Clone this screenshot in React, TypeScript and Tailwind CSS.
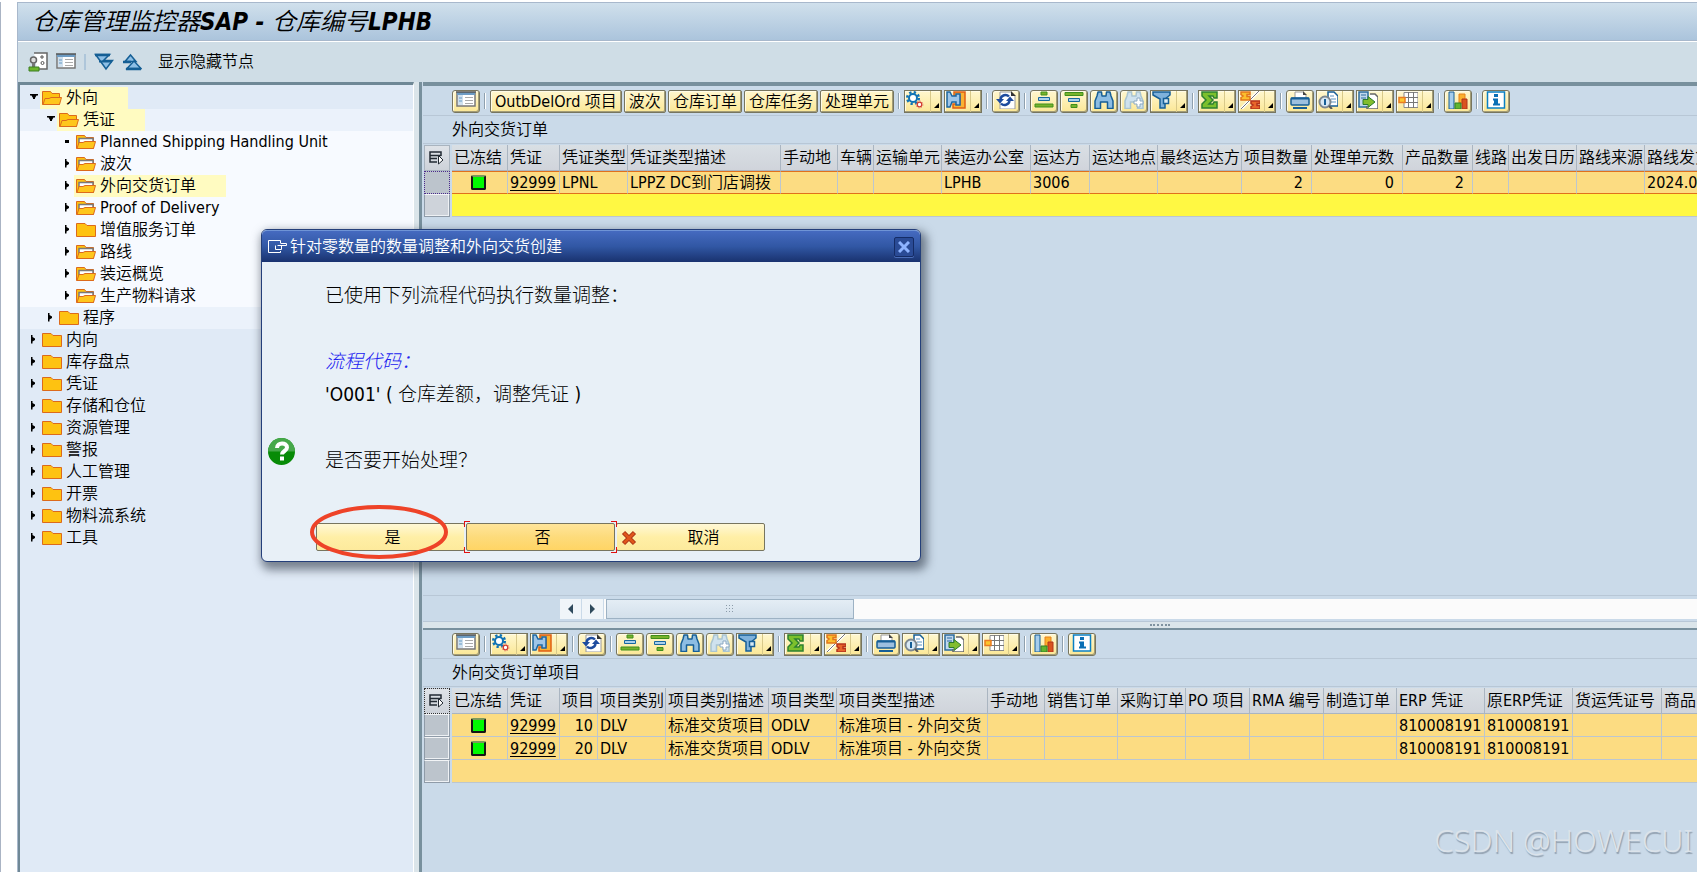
import type { ReactNode } from "react";
import clsx from "clsx";

type TreeItem = {
  label: string;
  level: 0 | 1 | 2;
  icon: "open" | "closed" | "doc";
  marker: "down" | "right" | "dot";
  marked?: boolean;
};

type Column = { title: string; width: number; align?: "right" };

const tree: TreeItem[] = [
  { label: "外向", level: 0, icon: "open", marker: "down", marked: true },
  { label: "凭证", level: 1, icon: "open", marker: "down", marked: true },
  { label: "Planned Shipping Handling Unit", level: 2, icon: "doc", marker: "dot" },
  { label: "波次", level: 2, icon: "doc", marker: "right" },
  { label: "外向交货订单", level: 2, icon: "doc", marker: "right", marked: true },
  { label: "Proof of Delivery", level: 2, icon: "doc", marker: "right" },
  { label: "增值服务订单", level: 2, icon: "closed", marker: "right" },
  { label: "路线", level: 2, icon: "doc", marker: "right" },
  { label: "装运概览", level: 2, icon: "doc", marker: "right" },
  { label: "生产物料请求", level: 2, icon: "doc", marker: "right" },
  { label: "程序", level: 1, icon: "closed", marker: "right" },
  { label: "内向", level: 0, icon: "closed", marker: "right" },
  { label: "库存盘点", level: 0, icon: "closed", marker: "right" },
  { label: "凭证", level: 0, icon: "closed", marker: "right" },
  { label: "存储和仓位", level: 0, icon: "closed", marker: "right" },
  { label: "资源管理", level: 0, icon: "closed", marker: "right" },
  { label: "警报", level: 0, icon: "closed", marker: "right" },
  { label: "人工管理", level: 0, icon: "closed", marker: "right" },
  { label: "开票", level: 0, icon: "closed", marker: "right" },
  { label: "物料流系统", level: 0, icon: "closed", marker: "right" },
  { label: "工具", level: 0, icon: "closed", marker: "right" },
];

const orderColumns: Column[] = [
  { title: "已冻结", width: 56 },
  { title: "凭证", width: 52 },
  { title: "凭证类型", width: 68 },
  { title: "凭证类型描述", width: 153 },
  { title: "手动地", width: 57 },
  { title: "车辆", width: 36 },
  { title: "运输单元", width: 68 },
  { title: "装运办公室", width: 89 },
  { title: "运达方", width: 59 },
  { title: "运达地点", width: 68 },
  { title: "最终运达方", width: 84 },
  { title: "项目数量", width: 70, align: "right" },
  { title: "处理单元数", width: 91, align: "right" },
  { title: "产品数量", width: 70, align: "right" },
  { title: "线路", width: 36 },
  { title: "出发日历", width: 68 },
  { title: "路线来源", width: 68 },
  { title: "路线发货", width: 120 },
];

const orderRows = [
  ["*", "92999", "LPNL", "LPPZ DC到门店调拨", "", "", "", "LPHB", "3006", "", "", "2", "0", "2", "", "", "", "2024.0"],
];

const itemColumns: Column[] = [
  { title: "已冻结", width: 56 },
  { title: "凭证", width: 52 },
  { title: "项目", width: 38, align: "right" },
  { title: "项目类别", width: 68 },
  { title: "项目类别描述", width: 103 },
  { title: "项目类型", width: 68 },
  { title: "项目类型描述", width: 151 },
  { title: "手动地", width: 57 },
  { title: "销售订单", width: 73 },
  { title: "采购订单", width: 68 },
  { title: "PO 项目", width: 64 },
  { title: "RMA 编号", width: 74 },
  { title: "制造订单", width: 73 },
  { title: "ERP 凭证", width: 88 },
  { title: "原ERP凭证", width: 88 },
  { title: "货运凭证号", width: 89 },
  { title: "商品", width: 120 },
];

const itemRows = [
  ["*", "92999", "10", "DLV", "标准交货项目", "ODLV", "标准项目 - 外向交货", "", "", "", "", "", "", "810008191", "810008191", "", ""],
  ["*", "92999", "20", "DLV", "标准交货项目", "ODLV", "标准项目 - 外向交货", "", "", "", "", "", "", "810008191", "810008191", "", ""],
];

const icons: Record<string, ReactNode> = {
  detail: (
    <>
      <rect x="1" y="2" width="18" height="13" fill="#fff" stroke="#777" strokeWidth="1.500" />
      <path d="M2 3h5v11H2z" fill="#cfe0ee" />
      <rect x="1" y="1" width="18" height="3" fill="#6d9cc4" />
      <path d="M0 1h20" stroke="#555" strokeWidth="1.500" />
      <path d="M3 7h3M3 10h3" stroke="#8bb2d4" strokeWidth="1.500" />
      <path d="M9 6.500h8M9 9.500h8M9 12.500h8" stroke="#aaa" />
    </>
  ),
  gears: (
    <>
      <circle cx="7" cy="7" r="4" fill="#fff" stroke="#0f72b5" strokeWidth="2" />
      <circle cx="7" cy="7" r="5.800" fill="none" stroke="#0f72b5" strokeWidth="2.500" strokeDasharray="2.280 2.280" />
      <circle cx="13.500" cy="13.500" r="2.300" fill="#fff" stroke="#d23b2f" strokeWidth="1.300" />
      <circle cx="13.500" cy="13.500" r="3.500" fill="none" stroke="#e08377" strokeDasharray="1.200 1.500" />
    </>
  ),
  flow: (
    <>
      <path d="M8 1h11v16H7v-4h7V5H8z" fill="#f9b233" stroke="#df5f15" strokeWidth="1.500" />
      <path d="M1 1h3l2 4h4V3h4v11h-4v-3H6l-2 5H1z" fill="#9fc6e8" stroke="#1c67a3" strokeWidth="1.500" />
    </>
  ),
  refresh: (
    <>
      <path d="M4 1h11l4 4v13H4z" fill="#fff" stroke="#999" />
      <path d="M15 0v5h5z" fill="#333" />
      <path d="M4.500 8a5 5 0 0 1 8.500-2.500M13.500 10a5 5 0 0 1-8.500 2.500" fill="none" stroke="#1d4b9e" strokeWidth="2.500" />
      <path d="M0 8h8l-4 4.500zM10 10h8l-4-4.500z" fill="#1d4b9e" />
    </>
  ),
  asc: (
    <>
      <path d="M7 1h6v3H7z" fill="#7ab32c" stroke="#3f8f1c" />
      <path d="M4.500 6.500h11v3h-11z" fill="#a9d0ec" stroke="#17679f" />
      <path d="M1 13h18v3H1z" fill="#7ab32c" stroke="#3f8f1c" />
    </>
  ),
  desc: (
    <>
      <path d="M1 1.500h18v3H1z" fill="#7ab32c" stroke="#3f8f1c" />
      <path d="M4.500 7.500h11v3h-11z" fill="#a9d0ec" stroke="#17679f" />
      <path d="M7 13.500h6v3H7z" fill="#7ab32c" stroke="#3f8f1c" />
    </>
  ),
  find: (
    <path
      d="M4 1h3.500l.500 4h4l.500-4H16l1 4 2 5v7.500h-5.500V11h-7v6.500H1V10l2-5z"
      fill="#8dbde3"
      stroke="#165e96"
      strokeWidth="1.500"
      strokeLinejoin="round"
    />
  ),
  findNext: (
    <>
      <path d="M4 1h3.500l.500 4h4l.500-4H16l1 4 2 5v7.500h-5.500V11h-7v6.500H1V10l2-5z" fill="#cfe2ee" stroke="#a9c4d0" strokeWidth="1.500" />
      <path d="M13 7h3v3h3v3h-3v3h-3v-3h-3v-3h3z" fill="#fff" stroke="#8ba9c2" />
    </>
  ),
  filter: (
    <>
      <path d="M1 1h17v3l-5 4v9H8V8L1 4z" fill="#7fb2dc" stroke="#175f97" strokeWidth="1.500" />
      <path d="M11.500 7.500h5v5h-5z" fill="#d9eaf5" stroke="#175f97" strokeWidth="1.500" />
    </>
  ),
  sum: (
    <path
      d="M2 1h15v6h-3l-1-2H9l4 4-4 4h4l1-2h3v6H2v-4l4-4-4-4z"
      fill="#7cc02c"
      stroke="#2c8030"
      strokeWidth="1.500"
    />
  ),
  subtotal: (
    <>
      <path d="M1 18 19 0" stroke="#fff" strokeWidth="3" />
      <path d="M1 18 19 0" stroke="#777" />
      <path d="M1 1h9v2.500H7v2h3V9H1V6.500L3 5 1 3.500z" fill="#fbbf2d" stroke="#e2761b" strokeWidth="1.500" />
      <path d="M11 10h9v2.500h-3v2h3V18h-9v-2.500l2-1.500-2-1.500z" fill="#e8662a" stroke="#b5321c" strokeWidth="1.500" />
    </>
  ),
  print: (
    <>
      <path d="M5 1h8l3 3v5H5z" fill="#fff" stroke="#999" />
      <path d="M13 0v4h4z" fill="#444" />
      <rect x="1" y="7" width="18" height="7" rx="1" fill="#9cbfdf" stroke="#165e96" strokeWidth="1.500" />
      <path d="M1 7.500h18" stroke="#165e96" strokeWidth="2" />
      <path d="M3 16h14v2H3z" fill="#165e96" />
    </>
  ),
  preview: (
    <>
      <path d="M10 1h6l4 4v10H10z" fill="#fff" stroke="#165e96" strokeWidth="1.500" />
      <path d="M12 5h4M13 8h5M13 11h5" stroke="#5b93bf" />
      <circle cx="7" cy="11" r="5.500" fill="#d7e8f4" stroke="#7d878f" strokeWidth="2" />
      <path d="M7 8v6" stroke="#165e96" strokeWidth="2" />
      <path d="m11 15 3 3" stroke="#555" strokeWidth="2" />
    </>
  ),
  exportFile: (
    <>
      <path d="M1 1h9v15H1z" fill="#c1d8ed" stroke="#2b6ba0" strokeWidth="1.500" />
      <path d="M3 4h5M3 7h5" stroke="#2b6ba0" />
      <path d="M12 3h5l3 3v12H9v-3" fill="#fff" stroke="#666" strokeWidth="1.500" />
      <path d="M5 8.500h5V5.500l7 5.500-7 5.500v-3H5z" fill="#82bd2e" stroke="#2b7a2d" />
    </>
  ),
  layout: (
    <>
      <path d="M6 1.500h14v15H6z" fill="#fff" stroke="#888" />
      <path d="M10.500 1v16M15.500 1v16M6 6.500h14M6 11.500h14" stroke="#777" />
      <path d="M1 6.500h6v5H1z" fill="#fbc62e" stroke="#ea7b22" strokeWidth="1.500" />
    </>
  ),
  chart: (
    <>
      <path d="M1 1h5v17H1z" fill="#a6cdec" stroke="#165e96" />
      <path d="M11 3h6v9h-6z" fill="#fbb02d" stroke="#e7801b" />
      <path d="M14 8h5v10h-5z" fill="#d9531e" stroke="#b0351b" />
      <path d="M7 12h6v6H7z" fill="#62b42d" stroke="#2e8128" />
    </>
  ),
  info: (
    <>
      <rect x="1.500" y="1" width="17" height="16" fill="#fff" stroke="#0a80c4" strokeWidth="1.500" />
      <path d="M8 3h4v3H8zM7 7.500h5v5h2v2H7v-2h1v-3H7z" fill="#0a6fb5" />
    </>
  ),
};

function Icon({ name }: { name: string }) {
  return (
    <svg viewBox="0 0 20 18" className="h-[18px] w-5 shrink-0" aria-hidden="true">
      {icons[name]}
    </svg>
  );
}

const buttonFace =
  "h-[23px] shrink-0 border border-[#77755f] bg-gradient-to-b from-[#fff7cf] to-[#fbe795] shadow-[inset_-1px_-1px_0_#a39d77,inset_1px_1px_0_#fffbe6]";

function IconButton({ name, label }: { name: string; label: string }) {
  return (
    <button type="button" aria-label={label} className={clsx(buttonFace, "flex w-7 justify-center rounded-[3px]")}>
      <Icon name={name} />
    </button>
  );
}

function MenuButton({ name, label }: { name: string; label: string }) {
  return (
    <button type="button" aria-label={label} className={clsx(buttonFace, "flex w-[38px] pl-px")}>
      <Icon name={name} />
      <span className="ml-1 flex h-full items-end border-l border-[#d8c98a] pb-1 pl-[3px]">
        <svg viewBox="0 0 5 5" className="size-[5px]" aria-hidden="true">
          <path d="M5 0v5H0z" />
        </svg>
      </span>
    </button>
  );
}

function TextButton({ children }: { children: ReactNode }) {
  return (
    <button type="button" className={clsx(buttonFace, "rounded-[2px] px-1 leading-[21px] whitespace-nowrap")}>
      {children}
    </button>
  );
}

function Separator() {
  return <span className="mx-0.5 h-4 w-0.5 border-l border-[#8fa0ae] bg-white" />;
}

function Toolbar({ children }: { children?: ReactNode }) {
  return (
    <div className="flex h-[29px] shrink-0 items-center gap-0.5 overflow-hidden border-b border-[#b8c7d6] pl-[29px]">
      <IconButton name="detail" label="明细" />
      <Separator />
      {children}
      <MenuButton name="gears" label="设置" />
      <MenuButton name="flow" label="流程" />
      <Separator />
      <IconButton name="refresh" label="刷新" />
      <Separator />
      <IconButton name="asc" label="升序" />
      <IconButton name="desc" label="降序" />
      <IconButton name="find" label="查找" />
      <IconButton name="findNext" label="查找下一个" />
      <MenuButton name="filter" label="过滤器" />
      <Separator />
      <MenuButton name="sum" label="合计" />
      <MenuButton name="subtotal" label="小计" />
      <Separator />
      <IconButton name="print" label="打印" />
      <MenuButton name="preview" label="打印预览" />
      <MenuButton name="exportFile" label="导出" />
      <MenuButton name="layout" label="布局" />
      <Separator />
      <IconButton name="chart" label="图形" />
      <Separator />
      <IconButton name="info" label="信息" />
    </div>
  );
}

function SelectAllIcon() {
  return (
    <svg viewBox="0 0 16 14" className="mx-auto h-3.5 w-4" fill="none" stroke="#222a33" aria-hidden="true">
      <path d="M12 5V1H1v10h7M1 4.500h11M1 7.500h7" strokeWidth="1.500" />
      <path d="M9.500 4.500 14 9l-4.500 4z" fill="#fff" />
    </svg>
  );
}

function Lamp() {
  return (
    <span className="ml-[17px] block size-[15px] rounded-[2px] border-2 border-[#151515] border-t-[#7b9a5c] bg-[#00fa00]" />
  );
}

function Grid({
  columns,
  rows,
  selected,
}: {
  columns: Column[];
  rows: string[][];
  selected?: boolean;
}) {
  const total = columns.reduce((sum, column) => sum + column.width, 29);
  const rowHead =
    "border border-t-[#f2f4f6] border-l-[#8f9ba8] border-r-[#8f9ba8] border-b-[#8f9ba8] shadow-[inset_-1px_-1px_0_#eef1f4]";

  return (
    <div className="overflow-hidden">
      <table className="table-fixed border-separate border-spacing-0 text-left" style={{ width: total }}>
        <colgroup>
          <col className="w-[29px]" />
          {columns.map((column) => (
            <col key={column.title} style={{ width: column.width }} />
          ))}
        </colgroup>
        <thead>
          <tr className="h-[26px]">
            <th className="p-0 pr-0.5 pl-px">
              <div
                className={clsx(
                  "flex h-[26px] items-center border bg-gradient-to-b from-[#dfe3e8] to-[#cdd2d9]",
                  selected ? "border-[#a9b4bf]" : "border-dotted border-[#333]",
                )}
              >
                <SelectAllIcon />
              </div>
            </th>
            {columns.map((column) => (
              <th
                key={column.title}
                className="overflow-hidden border-r border-b border-[#aab5c1] bg-gradient-to-b from-[#d9dfe4] to-[#d0d4db] p-0 pl-0.5 leading-[25px] font-[350] whitespace-nowrap"
              >
                {column.title}
              </th>
            ))}
          </tr>
        </thead>
        <tbody>
          {rows.map((row, index) => (
            <tr key={index} className="h-[23px]">
              <td className="p-0 pr-0.5 pl-px">
                <div
                  className={clsx(
                    "h-[23px] bg-[#bcc4cc]",
                    selected ? "border border-dotted border-[#4b2a8c]" : rowHead,
                  )}
                />
              </td>
              {row.map((value, i) => (
                <td
                  key={columns[i].title}
                  className={clsx(
                    "overflow-hidden border-r border-r-[#bcc6cf] bg-[#fcdc82] p-0 pl-0.5 leading-[21px] whitespace-nowrap",
                    selected ? "border-y border-y-[#e0701c]" : "border-b border-b-[#bcc6cf]",
                    columns[i].align === "right" && (selected ? "pr-2" : "pr-1"),
                    columns[i].align === "right" && "text-right",
                  )}
                >
                  {value === "*" ? (
                    <Lamp />
                  ) : i === 1 ? (
                    <a href="#doc" className="underline underline-offset-2">
                      {value}
                    </a>
                  ) : (
                    value
                  )}
                </td>
              ))}
            </tr>
          ))}
          <tr className="h-[23px]">
            <td className="p-0 pr-0.5 pl-px">
              <div className={clsx(rowHead, "h-[23px]", selected ? "bg-[#ced3da]" : "bg-[#bcc4cc]")} />
            </td>
            <td
              colSpan={columns.length}
              className={clsx("border-b border-[#bcc6cf] p-0", selected ? "bg-[#fff843]" : "bg-[#fcdc82]")}
            />
          </tr>
        </tbody>
      </table>
    </div>
  );
}

function FolderIcon({ kind }: { kind: TreeItem["icon"] }) {
  return (
    <svg viewBox="0 0 20 16" className="h-4 w-5 shrink-0" aria-hidden="true">
      {kind === "closed" ? (
        <path d="M.500 1.500h8.500l2 2h8.500v11H.500z" fill="#fec211" stroke="#dc6a1c" />
      ) : (
        <>
          <path d="M.500 1.500h8l1.500 2h7.500v11H.500z" fill="#fec211" stroke="#dc6a1c" />
          {kind === "doc" && <path d="M3 13V4.500h14V9" fill="#fff" stroke="#7a7a7a" strokeWidth="1.500" />}
          <path d="M3 8.500h4l2-1h10.500l-2 7H1z" fill="#fec61c" stroke="#dc6a1c" />
        </>
      )}
    </svg>
  );
}

function Marker({ kind }: { kind: TreeItem["marker"] }) {
  return (
    <svg viewBox="0 0 10 10" className="size-2.5 shrink-0" aria-hidden="true">
      {kind === "down" && <path d="M0 1h8v1.500H6.500L5 5v1H3V5L1.500 2.500H0z" />}
      {kind === "right" && <path d="M1 0h1.500v2L5 3.500v1.500L2.500 6.500v2H1z" />}
      {kind === "dot" && <path d="M1 3h4v3H1z" />}
    </svg>
  );
}

function Tree() {
  return (
    <ul>
      {tree.map((item, index) => (
        <li
          key={index}
          className={clsx(
            "flex h-[22px] items-center",
            item.level === 0 && "bg-[#e0eaf6] pl-[10px]",
            item.level === 1 && "bg-[#ebf2fb] pl-[27px]",
            item.level === 2 && "bg-[#f7faff] pl-11",
          )}
        >
          <Marker kind={item.marker} />
          <span
            className={clsx(
              "flex h-full items-center gap-1 pr-[30px] pl-0.5 leading-[22px] whitespace-nowrap",
              item.marked && "bg-[#fffbc1]",
            )}
          >
            <FolderIcon kind={item.icon} />
            {item.label}
          </span>
        </li>
      ))}
    </ul>
  );
}

function Dialog() {
  const face =
    "h-7 w-[149px] rounded-[2px] border border-[#77755f] bg-gradient-to-b from-[#fff8d6] via-[#ffefa6] to-[#fdea9c] pt-0.5 pl-1";
  return (
    <section
      role="dialog"
      aria-labelledby="dialog-title"
      className="absolute top-[229px] left-[261px] h-[333px] w-[660px] rounded-md border border-[#243f7a] bg-[#e8f0f7] shadow-[3px_5px_10px_3px_rgba(50,60,75,0.6)]"
    >
      <header className="flex h-8 items-center gap-0.5 rounded-t-[5px] border-t border-[#6f94d6] bg-gradient-to-b from-[#456ac0] via-[#3157a4] to-[#19326f] px-1.5 text-white">
        <svg viewBox="0 0 20 14" className="h-3.5 w-5" fill="none" stroke="#fff" aria-hidden="true">
          <path d="M12.500 3V.500H.500v12h12V11M12.500 3.500h6v2H9.500M7.500 5.500v4h6M13.500 5.500v4" />
        </svg>
        <h2 id="dialog-title">针对零数量的数量调整和外向交货创建</h2>
        <button
          type="button"
          aria-label="关闭"
          className="ml-auto flex size-5 items-center justify-center rounded-[2px] border border-[#152c66] bg-[#2a4b96] shadow-[0_1px_0_#4a6db8]"
        >
          <svg viewBox="0 0 12 12" className="size-3" aria-hidden="true">
            <path d="m1 1 10 10M11 1 1 11" stroke="#8db3ff" strokeWidth="3" />
          </svg>
        </button>
      </header>
      <div className="flex items-end gap-[30px] pt-[17px] pl-[6px]">
        <svg viewBox="0 0 27 27" className="mb-3 size-[27px]" aria-hidden="true">
          <circle cx="13.500" cy="13.500" r="13.500" fill="#078b07" />
          <path d="M0 13.500a13.500 13.500 0 0 1 27 0z" fill="#46a84a" />
          <path d="M9 10c0-6 10-6 10-.5 0 3.500-5 3.500-5 7" fill="none" stroke="#fff" strokeWidth="4" />
          <path d="M12 18.500h4v4h-4z" fill="#fff" />
        </svg>
        <div className="text-[19px] leading-[33px] font-light">
          <p>已使用下列流程代码执行数量调整：</p>
          <p>&nbsp;</p>
          <p className="text-[#2020f0] italic">流程代码：</p>
          <p>'O001' ( 仓库差额，调整凭证 )</p>
          <p>&nbsp;</p>
          <p>是否要开始处理？</p>
        </div>
      </div>
      <div className="relative mt-[46px] flex gap-px pl-[54px]">
        <button type="button" className={face}>
          是
        </button>
        <div className="relative">
          <button
            type="button"
            className="h-7 w-[149px] rounded-[2px] border border-[#77755f] bg-gradient-to-b from-[#ffe59a] via-[#fddb7b] to-[#ffd564] pt-0.5 pl-1"
          >
            否
          </button>
          {/* focus brackets */}
          <span className="pointer-events-none absolute -top-0.5 -left-0.5 h-8 w-1.5 border border-r-0 border-[#e01010]" />
          <span className="pointer-events-none absolute -top-0.5 -right-0.5 h-8 w-1.5 border border-l-0 border-[#e01010]" />
          <span className="pointer-events-none absolute top-1 -left-0.5 h-5 w-px bg-[#e8f0f7]" />
          <span className="pointer-events-none absolute top-1 -right-0.5 h-5 w-px bg-[#e8f0f7]" />
        </div>
        <button type="button" className={clsx(face, "flex items-center")}>
          <svg viewBox="0 0 16 16" className="size-4" aria-hidden="true">
            <path d="m2.500 2.500 11 11M13.500 2.500l-11 11" stroke="#a93216" strokeWidth="4.500" />
            <path d="m3 3 10 10M13 3 3 13" stroke="#e0561b" strokeWidth="2.500" />
          </svg>
          <span className="flex-1 pl-1.5">取消</span>
        </button>
        <svg viewBox="0 0 140 56" className="pointer-events-none absolute -top-[19px] left-12 h-14 w-[140px]" aria-hidden="true">
          <ellipse cx="69" cy="28" rx="67" ry="25" fill="none" stroke="#ee4328" strokeWidth="4" />
        </svg>
      </div>
    </section>
  );
}

export default function App() {
  return (
    <div className="relative flex h-screen overflow-hidden bg-white pt-0.5 font-['DejaVu_Sans_Condensed','Noto_Sans','Noto_Sans_CJK_SC',sans-serif] text-base font-[350] text-black">
      <div className="w-[17px] shrink-0 border-l border-[#aab4c4] bg-white" />
      <div className="flex min-w-0 flex-1 flex-col border-l border-[#a8b8cc] bg-[#cfdde6]">
        <header className="flex h-[39px] shrink-0 items-center border-t border-b border-t-[#a8b8cc] border-b-[#a8b8cc] bg-gradient-to-b from-[#d0e0ec] to-[#abc4dc] pl-3.5">
          <h1 className="text-2xl leading-9 whitespace-nowrap italic">
            仓库管理监控器<b>SAP - </b>仓库编号<b>LPHB</b>
          </h1>
        </header>
        <div className="flex h-[41px] shrink-0 items-center border-t border-white pl-2.5">
          <svg viewBox="0 0 20 20" className="size-5" aria-hidden="true">
            <path d="M6 1h13v16H9" fill="#fff" stroke="#666" strokeWidth="1.500" />
            <path d="M12 5h4M14 3v4" fill="none" stroke="#555" />
            <circle cx="14.500" cy="11" r="1.500" fill="none" stroke="#555" />
            <circle cx="5.500" cy="8" r="3" fill="#ddd" stroke="#666" strokeWidth="1.500" />
            <path d="M4 11h3v4H4z" fill="#777" />
            <path d="M1 19v-4h10v4z" fill="#6cb52d" stroke="#3c7f22" />
          </svg>
          <svg viewBox="0 0 20 18" className="ml-2 h-[18px] w-5" aria-hidden="true">
            {icons.detail}
          </svg>
          <span className="mx-2 h-4 w-0.5 bg-[#aec6da]" />
          <svg viewBox="0 0 20 18" className="h-[18px] w-5" fill="#8dbfe6" stroke="#155f95" strokeWidth="1.500" aria-hidden="true">
            <path d="M1.500 1.500h14l-6 6h9L12 16 7 9z" />
            <path d="M1 2h15" strokeWidth="2.500" />
            <path d="M5 8.500h13" strokeWidth="2" />
          </svg>
          <svg viewBox="0 0 20 18" className="ml-2 h-[18px] w-5" fill="#8dbfe6" stroke="#155f95" strokeWidth="1.500" aria-hidden="true">
            <path d="M3 8.500 8.500 2 14 8.500z" />
            <path d="M5 15.500 12 8l7 7.500z" />
            <path d="M1 9h8M4 16h15" strokeWidth="2.500" />
          </svg>
          <button type="button" className="ml-4">
            显示隐藏节点
          </button>
        </div>
        <div className="flex min-h-0 flex-1">
          <nav
            aria-label="仓库节点"
            className="w-[396px] shrink-0 overflow-hidden border-t-[3px] border-l-2 border-t-[#6f8896] border-l-[#6f8896] border-r border-r-white bg-[#e0eaf6] pt-0.5"
          >
            <Tree />
          </nav>
          <div className="w-[5px] shrink-0 bg-[#dbe5ea]" />
          <main className="flex min-w-0 flex-1 flex-col border-l-[3px] border-[#78909d] bg-[#cadae9] pl-px">
            <section className="flex min-h-0 flex-1 flex-col border-t-4 border-[#78909d] pt-px">
              <Toolbar>
                <TextButton>OutbDelOrd 项目</TextButton>
                <TextButton>波次</TextButton>
                <TextButton>仓库订单</TextButton>
                <TextButton>仓库任务</TextButton>
                <TextButton>处理单元</TextButton>
                <Separator />
              </Toolbar>
              <h2 className="mb-px h-7 border-b border-[#b8c7d6] pl-[29px] leading-7">外向交货订单</h2>
              <Grid columns={orderColumns} rows={orderRows} selected />
              <div className="mt-auto flex h-[27px] items-center border-y border-[#b8c7d6] pl-[137px]">
                <button type="button" aria-label="向左滚动" className="flex h-5 w-[21px] items-center justify-center bg-[#f0f5f9]">
                  <svg viewBox="0 0 6 10" className="h-2.5 w-1.5" aria-hidden="true">
                    <path d="M5 0v10L0 5z" fill="#2f4a5c" />
                  </svg>
                </button>
                <button type="button" aria-label="向右滚动" className="ml-px flex h-5 w-[21px] items-center justify-center bg-[#f0f5f9]">
                  <svg viewBox="0 0 6 10" className="h-2.5 w-1.5" aria-hidden="true">
                    <path d="M0 0v10l5-5z" fill="#2f4a5c" />
                  </svg>
                </button>
                <div className="ml-px h-5 flex-1 bg-[#fbfbfb] pl-0.5">
                  <div className="flex h-5 w-[248px] items-center justify-center border border-[#9db2c4] bg-gradient-to-b from-[#e4edf5] to-[#d3e0eb]">
                    <svg viewBox="0 0 9 7" className="h-[7px] w-[9px]" fill="#8b9ba9" aria-hidden="true">
                      <path d="M0 0h1v1H0zM3 0h1v1H3zM6 0h1v1H6zM0 3h1v1H0zM3 3h1v1H3zM6 3h1v1H6zM0 6h1v1H0zM3 6h1v1H3zM6 6h1v1H6z" />
                    </svg>
                  </div>
                </div>
              </div>
            </section>
            <div className="flex h-1.5 shrink-0 items-center justify-center bg-[#dbe5ea] pl-[200px]">
              <span className="w-5 border-t-2 border-dotted border-[#7f93a1]" />
            </div>
            <section className="h-[244px] shrink-0 overflow-hidden border-t-2 border-[#78909d]">
              <Toolbar />
              <h2 className="mb-px h-7 border-b border-[#b8c7d6] pl-[29px] leading-7">外向交货订单项目</h2>
              <Grid columns={itemColumns} rows={itemRows} />
            </section>
          </main>
        </div>
      </div>
      <Dialog />
      <p className="absolute right-1 bottom-3 font-['Noto_Sans',sans-serif] text-[31px] leading-10 font-light text-[#dce3ea] [text-shadow:1px_2px_1px_#93a1b0]">
        CSDN @HOWECUI
      </p>
    </div>
  );
}
